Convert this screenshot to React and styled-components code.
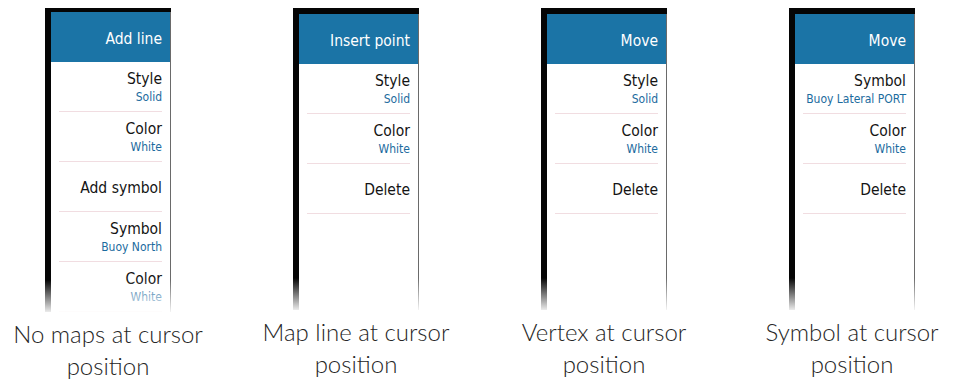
import React from "react";
import styled, { createGlobalStyle } from "styled-components";

const GlobalStyle = createGlobalStyle`
  body {
    margin: 0;
    background: #fff;
    font-family: Lato, "Open Sans", sans-serif;
  }
`;

const Page = styled.div`
  display: flex;
  gap: 122px;
  padding: 8px 0 0 45px;
  width: 956px;
  height: 380px;
  box-sizing: border-box;
  overflow: hidden;
`;

const Column = styled.div`
  display: flex;
  flex-direction: column;
  align-items: center;
  width: 126px;
  flex-shrink: 0;
`;

const Frame = styled.div`
  position: relative;
  display: flex;
  flex-direction: column;
  width: 126px;
  height: 304px;
`;

const TopBar = styled.div`
  height: 6px;
  background: #050505;
`;

const Body = styled.div`
  display: flex;
  flex: 1;
`;

const LeftBar = styled.div`
  width: 6px;
  background: #050505;
`;

const RightEdge = styled.div`
  width: 1px;
  background: #6a6a6a;
`;

const Screen = styled.div`
  flex: 1;
  display: flex;
  flex-direction: column;
  background: #fff;
  overflow: hidden;
  font-family: "DejaVu Sans Condensed", "DejaVu Sans", sans-serif;
`;

const Fade = styled.div`
  position: absolute;
  left: 0;
  right: 0;
  bottom: 0;
  height: 32px;
  background: linear-gradient(to bottom, rgba(255, 255, 255, 0), rgba(255, 255, 255, 0.92));
`;

const Header = styled.div`
  height: 50px;
  box-sizing: border-box;
  flex-shrink: 0;
  display: flex;
  align-items: center;
  justify-content: flex-end;
  padding: 3px 8px 0 0;
  background: #1b74a6;
  color: #fff;
  font-size: 15.5px;
`;

const Row = styled.div`
  flex-shrink: 0;
  box-sizing: content-box;
  margin: 0 8px;
  padding-top: 2px;
  height: 47px;
  display: flex;
  flex-direction: column;
  justify-content: center;
  align-items: flex-end;
  border-bottom: 1px solid #f1dde1;
  white-space: nowrap;
`;

const Title = styled.div`
  font-size: 15.5px;
  line-height: 18px;
  color: #141414;
`;

const Value = styled.div`
  font-size: 12px;
  line-height: 16px;
  margin-top: 1px;
  color: #1c6b9e;
`;

const Caption = styled.div`
  margin-top: 6px;
  white-space: nowrap;
  text-align: center;
  font-size: 24px;
  font-weight: 300;
  line-height: 32px;
  color: #262626;
`;

const panels = [
  {
    header: "Add line",
    rows: [
      ["Style", "Solid"],
      ["Color", "White"],
      ["Add symbol"],
      ["Symbol", "Buoy North"],
      ["Color", "White"],
    ],
    caption: ["No maps at cursor", "position"],
  },
  {
    header: "Insert point",
    rows: [["Style", "Solid"], ["Color", "White"], ["Delete"]],
    caption: ["Map line at cursor", "position"],
  },
  {
    header: "Move",
    rows: [["Style", "Solid"], ["Color", "White"], ["Delete"]],
    caption: ["Vertex at cursor", "position"],
  },
  {
    header: "Move",
    rows: [["Symbol", "Buoy Lateral PORT"], ["Color", "White"], ["Delete"]],
    caption: ["Symbol at cursor", "position"],
  },
];

export default function App() {
  return (
    <>
      <GlobalStyle />
      <Page>
        {panels.map((p, i) => (
          <Column key={i}>
            <Frame>
              <TopBar />
              <Body>
                <LeftBar />
                <Screen>
                  <Header>{p.header}</Header>
                  {p.rows.map(([title, value], j) => (
                    <Row key={j}>
                      <Title>{title}</Title>
                      {value && <Value>{value}</Value>}
                    </Row>
                  ))}
                </Screen>
                <RightEdge />
              </Body>
              <Fade />
            </Frame>
            <Caption>
              {p.caption[0]}
              <br />
              {p.caption[1]}
            </Caption>
          </Column>
        ))}
      </Page>
    </>
  );
}
